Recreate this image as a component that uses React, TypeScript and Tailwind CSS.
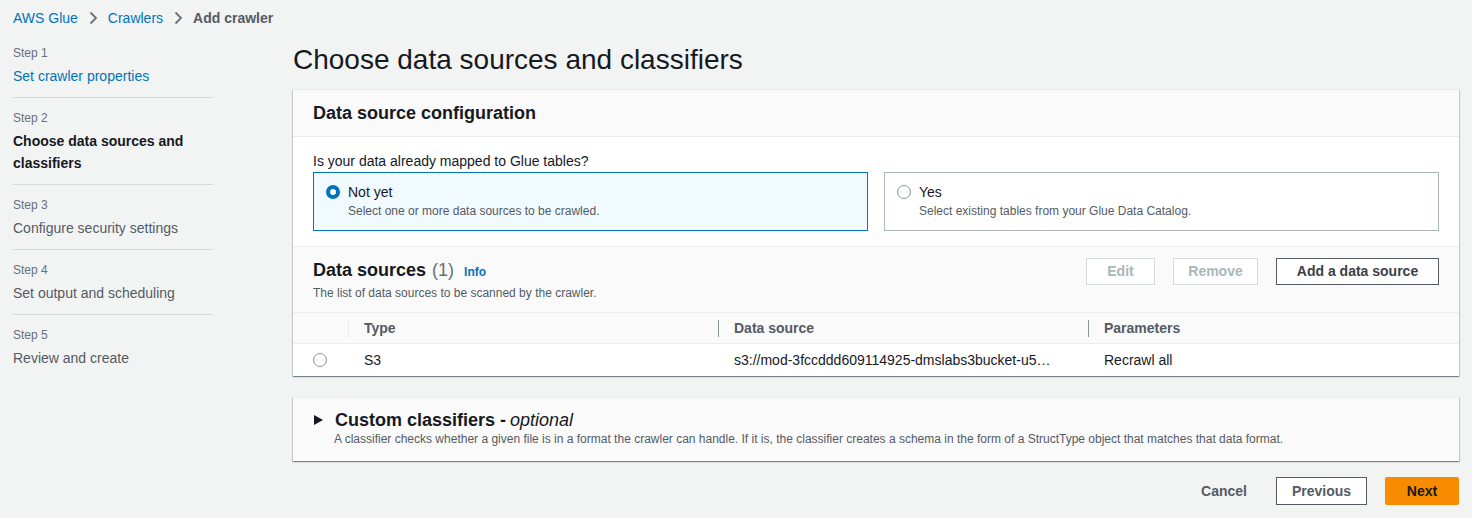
import React from 'react';

const font = { fontFamily: '"Liberation Sans", Arial, sans-serif' };

function Chevron() {
  return (
    <svg width="10" height="14" viewBox="0 0 10 14" className="mx-[10px] shrink-0">
      <path d="M2.5 1.5 L8 7 L2.5 12.5" fill="none" stroke="#687078" strokeWidth="1.8" />
    </svg>
  );
}

function Radio({ checked }: { checked?: boolean }) {
  return checked ? (
    <span className="w-[14px] h-[14px] rounded-full border-[4px] border-[#0073bb] bg-white shrink-0" />
  ) : (
    <span className="w-[14px] h-[14px] rounded-full border border-[#879596] bg-white shrink-0" />
  );
}

const steps = [
  { n: 1, label: 'Set crawler properties', state: 'link' },
  { n: 2, label: 'Choose data sources and classifiers', state: 'active' },
  { n: 3, label: 'Configure security settings', state: 'todo' },
  { n: 4, label: 'Set output and scheduling', state: 'todo' },
  { n: 5, label: 'Review and create', state: 'todo' },
];

const panelShadow =
  'shadow-[0_1px_1px_0_rgba(0,28,36,0.3),1px_1px_1px_0_rgba(0,28,36,0.15),-1px_1px_1px_0_rgba(0,28,36,0.15)]';

export default function App() {
  return (
    <div style={font} className="min-h-[518px] w-full bg-[#f2f3f3] text-[#16191f] px-[13px]">
      {/* Breadcrumbs */}
      <nav className="flex items-center h-[36px] text-[14px]">
        <span className="text-[#0073bb]">AWS Glue</span>
        <Chevron />
        <span className="text-[#0073bb]">Crawlers</span>
        <Chevron />
        <span className="text-[#545b64] font-bold">Add crawler</span>
      </nav>

      <div className="flex">
        {/* Wizard steps */}
        <aside className="w-[200px] shrink-0">
          {steps.map((s, i) => (
            <div
              key={s.n}
              className={`${i === 0 ? 'pt-[9px]' : 'pt-3'} pb-[10px] ${
                i < steps.length - 1 ? 'border-b border-[#d5dbdb]' : ''
              }`}
            >
              <div className="text-[12px] leading-4 text-[#687078]">Step {s.n}</div>
              <div
                className={`mt-1 text-[14px] leading-[22px] ${
                  s.state === 'link'
                    ? 'text-[#0073bb]'
                    : s.state === 'active'
                    ? 'font-bold text-[#16191f]'
                    : 'text-[#545b64]'
                }`}
              >
                {s.label}
              </div>
            </div>
          ))}
        </aside>

        {/* Main content */}
        <main className="flex-1 ml-[80px] min-w-0">
          <h1 className="text-[28px] leading-[36px] font-normal text-[#16191f] mt-[6px] mb-[11px]">
            Choose data sources and classifiers
          </h1>

          {/* Data source configuration panel */}
          <section className={`bg-white border-t border-[#eaeded] ${panelShadow}`}>
            <div className="bg-[#fafafa] h-[47px] px-5 flex items-center border-b border-[#eaeded]">
              <h2 className="text-[18px] font-bold leading-[22px]">Data source configuration</h2>
            </div>
            <div className="px-5 pt-[13px] pb-[15px]">
              <div className="text-[14px] leading-[22px]">Is your data already mapped to Glue tables?</div>
              <div className="grid grid-cols-2 gap-[16px]">
                <div className="border border-[#0073bb] bg-[#f1faff] px-3 pt-[8px] pb-[11px]">
                  <div className="flex items-center gap-2">
                    <Radio checked />
                    <span className="text-[14px] leading-[22px]">Not yet</span>
                  </div>
                  <div className="pl-[22px] text-[12px] leading-4 text-[#545b64]">
                    Select one or more data sources to be crawled.
                  </div>
                </div>
                <div className="border border-[#aab7b8] bg-white px-3 pt-[8px] pb-[11px]">
                  <div className="flex items-center gap-2">
                    <Radio />
                    <span className="text-[14px] leading-[22px]">Yes</span>
                  </div>
                  <div className="pl-[22px] text-[12px] leading-4 text-[#545b64]">
                    Select existing tables from your Glue Data Catalog.
                  </div>
                </div>
              </div>
            </div>

            {/* Data sources table */}
            <div className="bg-[#fafafa] border-t border-[#eaeded] px-5 pt-3 pb-[11px] flex justify-between">
              <div>
                <div className="flex items-baseline leading-[22px]">
                  <h2 className="text-[18px] font-bold">Data sources</h2>
                  <span className="text-[18px] text-[#687078] ml-[6px]">(1)</span>
                  <span className="text-[12px] font-bold text-[#0073bb] ml-[10px]">Info</span>
                </div>
                <div className="mt-[2px] text-[12px] leading-4 text-[#545b64]">
                  The list of data sources to be scanned by the crawler.
                </div>
              </div>
              <div className="flex gap-[18px] -mt-[1px]">
                <button className="h-[27px] border border-[#d5dbdb] bg-white text-[14px] font-bold text-[#aab7b8] w-[69px]">
                  Edit
                </button>
                <button className="h-[27px] border border-[#d5dbdb] bg-white text-[14px] font-bold text-[#aab7b8] w-[85px]">
                  Remove
                </button>
                <button className="h-[27px] border border-[#545b64] bg-white text-[14px] font-bold text-[#3b4046] w-[163px]">
                  Add a data source
                </button>
              </div>
            </div>

            <div className="grid grid-cols-[55px_370px_370px_1fr] text-[14px]">
              <div className="h-[32px] bg-[#fafafa] border-y border-[#eaeded]" />
              {['Type', 'Data source', 'Parameters'].map((h, i) => (
                <div
                  key={h}
                  className="h-[32px] bg-[#fafafa] border-y border-[#eaeded] flex items-center"
                >
                  <span
                    className={`w-px h-[17px] ${i === 0 ? 'bg-[#eaeded]' : 'bg-[#879596]'}`}
                  />
                  <span className="pl-[15px] font-bold text-[#545b64]">{h}</span>
                </div>
              ))}
              <div className="h-[32px] flex items-center pl-5">
                <Radio />
              </div>
              <div className="h-[32px] flex items-center pl-4">S3</div>
              <div className="h-[32px] flex items-center pl-4 pr-5 min-w-0">
                <span className="whitespace-nowrap">s3://mod-3fccddd609114925-dmslabs3bucket-u5…</span>
              </div>
              <div className="h-[32px] flex items-center pl-4">Recrawl all</div>
            </div>
          </section>

          {/* Custom classifiers panel */}
          <section className={`mt-[21px] bg-[#fafafa] border-t border-[#eaeded] ${panelShadow} px-5 pt-[11px] pb-[14px]`}>
            <div className="flex items-center leading-[22px]">
              <svg width="9" height="10" viewBox="0 0 9 10" className="ml-[1px] mr-[12px]">
                <path d="M0 0 L9 5 L0 10 Z" fill="#16191f" />
              </svg>
              <span className="text-[18px] font-bold">Custom classifiers - </span>
              <span className="text-[18px] italic ml-[4px]">optional</span>
            </div>
            <div className="pl-[21px] text-[12px] leading-4 text-[#545b64]">
              A classifier checks whether a given file is in a format the crawler can handle. If it is, the
              classifier creates a schema in the form of a StructType object that matches that data format.
            </div>
          </section>

          {/* Footer actions */}
          <div className="flex justify-end items-center gap-[18px] mt-[16px]">
            <button className="h-[28px] mr-[11px] text-[14px] font-bold text-[#545b64]">Cancel</button>
            <button className="h-[28px] w-[91px] border border-[#545b64] bg-white text-[14px] font-bold text-[#545b64]">
              Previous
            </button>
            <button className="h-[28px] w-[74px] bg-[#f88c00] text-[14px] font-bold text-[#16191f] rounded-[2px]">
              Next
            </button>
          </div>
        </main>
      </div>
    </div>
  );
}
